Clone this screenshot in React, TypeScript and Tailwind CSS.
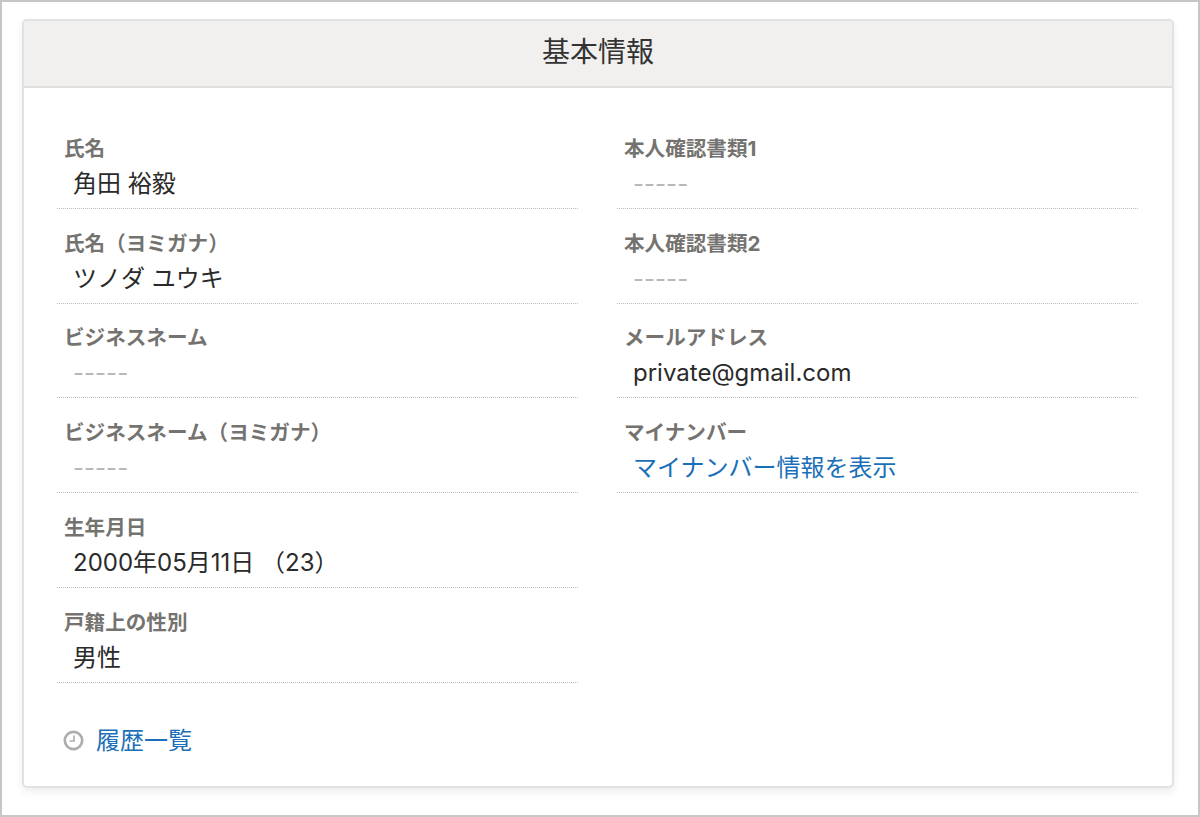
const font = { fontFamily: 'Inter, "Noto Sans CJK JP", sans-serif' };

type Item = { label: string; value: string; kind?: "empty" | "link" };

const left: Item[] = [
  { label: "氏名", value: "角田 裕毅" },
  { label: "氏名（ヨミガナ）", value: "ツノダ ユウキ" },
  { label: "ビジネスネーム", value: "-----", kind: "empty" },
  { label: "ビジネスネーム（ヨミガナ）", value: "-----", kind: "empty" },
  { label: "生年月日", value: "2000年05月11日 （23）" },
  { label: "戸籍上の性別", value: "男性" },
];

const right: Item[] = [
  { label: "本人確認書類1", value: "-----", kind: "empty" },
  { label: "本人確認書類2", value: "-----", kind: "empty" },
  { label: "メールアドレス", value: "private@gmail.com" },
  { label: "マイナンバー", value: "マイナンバー情報を表示", kind: "link" },
];

function Row({ item }: { item: Item }) {
  const valueClass =
    item.kind === "empty"
      ? "text-[#b8b8b8]"
      : item.kind === "link"
        ? "text-[#1b6fb8]"
        : "text-[#2a2a2a]";
  return (
    <div className="h-[94.8px] border-b border-dotted border-[#bdbdbd] flex flex-col justify-end pb-[5px]">
      <div className="pl-[7px] text-[20.6px] leading-[30px] font-bold text-[#757370]">{item.label}</div>
      <div className={`pl-4 text-[24px] leading-[39px] ${valueClass}`}>{item.value}</div>
    </div>
  );
}

export default function App() {
  return (
    <div style={font} className="w-[1200px] h-[817px] border-2 border-[#c6c6c6] bg-white pt-[17px] pl-5 pr-6 overflow-hidden">
      <div className="w-[1152px] h-[769px] rounded-[5px] border-2 border-[#e2e2e2] bg-white shadow-[0_4px_8px_rgba(0,0,0,0.07)] flex flex-col">
        <div className="h-[67px] shrink-0 bg-[#f1f0ef] border-b-2 border-[#dfdfdf] rounded-t-[3px] pb-[3px] flex items-center justify-center text-[28px] text-[#333333]">
          基本情報
        </div>
        <div className="flex gap-[39px] pl-[33px] pt-[26px]">
          <div className="w-[521px]">
            {left.map((i) => (
              <Row key={i.label} item={i} />
            ))}
          </div>
          <div className="w-[521px]">
            {right.map((i) => (
              <Row key={i.label} item={i} />
            ))}
          </div>
        </div>
        <div className="flex items-center gap-[12px] pl-[39px] mt-[40px]">
          <svg width="21" height="21" viewBox="0 0 21 21" fill="none" stroke="#adadad">
            <circle cx="10.5" cy="10.5" r="8.7" strokeWidth="2.7" />
            <path d="M11 5.5v5.5H6.5" strokeWidth="1.6" />
          </svg>
          <span className="text-[24px] leading-[36px] text-[#1b6fb8]">履歴一覧</span>
        </div>
      </div>
    </div>
  );
}
